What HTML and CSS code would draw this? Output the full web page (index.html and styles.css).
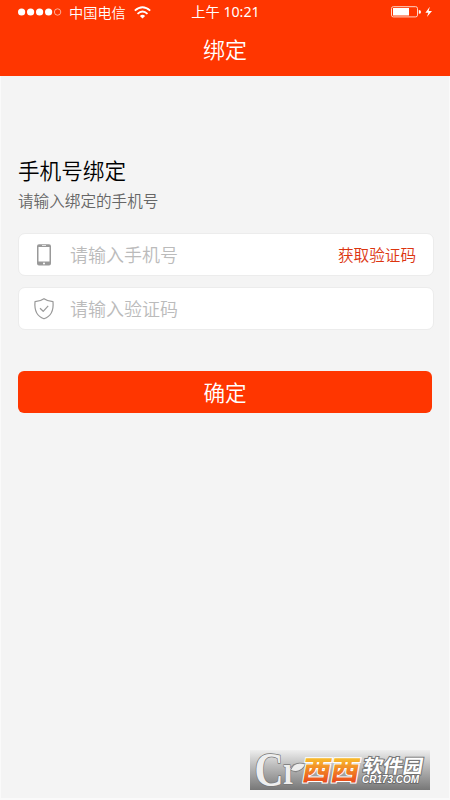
FILE: index.html
```html
<!DOCTYPE html>
<html lang="zh-CN">
<head>
<meta charset="utf-8">
<title>绑定</title>
<link rel="stylesheet" href="styles.css">
</head>
<body>
<div class="screen">
  <header class="header">
    <div class="status">
      <div class="carrier">
        <svg class="signal" width="44" height="8" viewBox="0 0 44 8"><g fill="#fff"><circle cx="3.6" cy="4" r="3.6"/><circle cx="12.6" cy="4" r="3.6"/><circle cx="21.6" cy="4" r="3.6"/><circle cx="30.6" cy="4" r="3.6"/></g><circle cx="39.6" cy="4" r="3.2" fill="none" stroke="#ffc9b9" stroke-width=".8"/></svg>
        <span>中国电信</span>
        <svg class="wifi" width="17" height="13" viewBox="0 0 17 13"><g fill="none" stroke="#fff" stroke-width="1.8"><path d="M.8 4.7Q8.5-2.3 16.2 4.7"/><path d="M3.5 7.8Q8.5 3.1 13.5 7.8"/></g><path d="M5.9 10Q8.5 7.7 11.1 10L8.5 12.5Z" fill="#fff"/></svg>
      </div>
      <div class="time">上午 10:21</div>
      <svg class="battery" width="42" height="12" viewBox="0 0 42 12"><rect x=".5" y=".7" width="26" height="10.2" rx="1.8" fill="none" stroke="#ffd5c8"/><path d="M2 2.1h16v7.4H2zM27.8 4q2.2 0 2.2 1.9t-2.2 1.9zM38.8.7 34.4 6.8h3L35.9 11.1 41 5.1h-3.3z" fill="#fff"/></svg>
    </div>
    <h1 class="title">绑定</h1>
  </header>
  <main class="content">
    <h2 class="heading">手机号绑定</h2>
    <p class="hint">请输入绑定的手机号</p>
    <div class="field">
      <svg class="icon" width="22" height="24" viewBox="0 0 22 24"><path fill="#999" fill-rule="evenodd" d="M6 1.200h10q2 0 2 2v17.400q0 2-2 2H6q-2 0-2-2V3.200q0-2 2-2zM5.500 4v14.600h11V4zM9 2.200v.8h4v-.8zM11 19.600a1 1 0 1 0 0 2 1 1 0 0 0 0-2z"/></svg>
      <span class="placeholder">请输入手机号</span>
      <span class="code">获取验证码</span>
    </div>
    <div class="field">
      <svg class="icon" width="22" height="24" viewBox="0 0 22 24"><g fill="none" stroke="#999" stroke-width="1.200" stroke-linejoin="round"><path d="M11 1.700Q7 4.500 2 4.600C1.300 12.500 3.700 19.300 11 21.800 18.300 19.300 20.700 12.500 20 4.600Q15 4.500 11 1.700Z"/><path d="m7 11.200 3.200 3.100 5-5.500"/></g></svg>
      <span class="placeholder">请输入验证码</span>
    </div>
    <div class="submit">确定</div>
  </main>
  <div class="watermark">
    <svg width="180" height="40" viewBox="0 0 180 40">
      <defs><linearGradient id="warm" x1="0" y1="0.2" x2="0" y2="0.85"><stop offset="0" stop-color="#f9c52e"/><stop offset="1" stop-color="#ea4c1d"/></linearGradient></defs>
      <g class="mark">
        <text x="4.500" y="35.500" font-size="49" textLength="29" lengthAdjust="spacingAndGlyphs">C</text>
        <text x="33" y="34" font-size="42" textLength="14" lengthAdjust="spacingAndGlyphs">r</text>
        <path d="M41 20Q45 11 55 14.500 50 23.500 41 20Z"/>
      </g>
      <text class="xixi" transform="translate(51 30) skewX(-10)" textLength="57" lengthAdjust="spacingAndGlyphs">西西</text>
      <text class="park" transform="translate(112 22.500) skewX(-10)" textLength="60" lengthAdjust="spacingAndGlyphs">软件园</text>
      <text class="domain" x="112" y="33" textLength="57" lengthAdjust="spacingAndGlyphs">CR173.COM</text>
    </svg>
  </div>
</div>
</body>
</html>
```
FILE: styles.css
```css
* { box-sizing: border-box; }
body { margin: 0; font-family: "Noto Sans CJK SC", sans-serif; font-weight: 350; }
svg { display: block; flex: none; overflow: visible; }
.screen { width: 450px; height: 800px; display: flex; flex-direction: column; background: #f4f4f4; border: solid #fafafa; border-width: 0 1px 2px; }
.header { height: 76px; margin: 0 -1px; background: #ff3600; color: #fff; }
.status { height: 24px; padding: 0 17px 0 18px; display: grid; grid-template-columns: 1fr auto 1fr; align-items: center; font-size: 14.2px; line-height: 22px; }
.carrier { display: flex; align-items: center; }
.carrier span { margin: 0 8px 0 7px; }
.time { font-family: "Noto Sans", "Noto Sans CJK SC", sans-serif; font-weight: 390; }
.battery { justify-self: end; }
.title { margin: 8px 0 0; font-size: 22px; line-height: 32px; font-weight: 350; text-align: center; }
.content { padding: 78px 17px 0 17px; }
.heading { margin: 0; font-size: 21.6px; line-height: 32px; font-weight: 350; color: #000; }
.hint { margin: 2px 0 21px; font-size: 15.6px; line-height: 24px; color: #666; }
.field { height: 43px; margin: 0 -2px 11px 0; padding: 0 17px 0 14px; display: flex; align-items: center; background: #fff; border: 1px solid #ececec; border-radius: 7px; }
.placeholder { margin: -2px 0 0 15px; font-size: 18px; line-height: 28px; color: #bbb; }
.code { margin: -2px 0 0 auto; font-size: 15.6px; line-height: 24px; color: #dc3510; }
.submit { height: 42px; margin-top: 41px; border-radius: 6px; background: #ff3600; color: #fff; font-size: 21.6px; line-height: 41px; text-align: center; }
.watermark { margin: auto 19px 8px auto; background: linear-gradient(#eee, #bbb 40%, #777); }
.mark { font-family: "Liberation Serif", serif; font-weight: 700; fill: #eee; stroke: #777; stroke-width: 1.500; stroke-linejoin: round; paint-order: stroke; }
.xixi { font-size: 27px; font-weight: 900; fill: url(#warm); stroke: #fff; stroke-width: 2; paint-order: stroke; }
.park { font-size: 19px; font-weight: 700; fill: #fff; stroke: #777; stroke-width: 2; paint-order: stroke; }
.domain { font-family: "Liberation Sans", sans-serif; font-size: 10px; font-style: italic; font-weight: 700; fill: #fff; stroke: #666; stroke-width: 1.500; paint-order: stroke; }
```
